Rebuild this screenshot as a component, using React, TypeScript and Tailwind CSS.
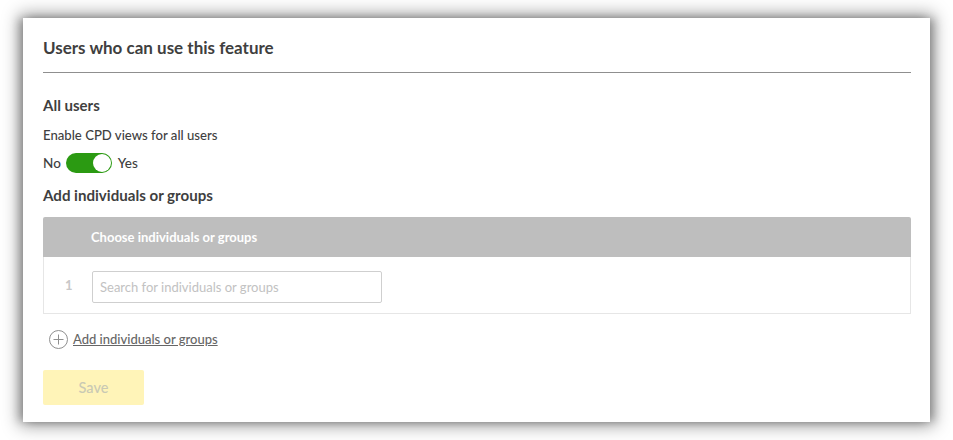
export default function App() {
  return (
    <div className="h-[440px] w-[953px] overflow-hidden bg-white pl-[23px] pt-[18px] font-['Lato',sans-serif] text-[#3f3f3f]">
      <div className="h-[404px] w-[907px] bg-white px-5 shadow-[0_0_16px_4px_rgba(0,0,0,0.38),-5px_0_8px_-1px_rgba(0,0,0,0.22),5px_0_8px_-1px_rgba(0,0,0,0.22)]">
        <div className="flex h-[55px] w-[868px] items-end border-b border-[#8f8f8f] pb-[14px]">
          <h1 className="text-[17px] font-bold leading-[20px]">Users who can use this feature</h1>
        </div>
        <h2 className="mt-[22px] text-[15px] font-bold leading-[20px]">All users</h2>
        <p className="mt-[10px] text-[13.15px] font-medium leading-[20px]">Enable CPD views for all users</p>
        <div className="mt-2 flex h-5 items-center text-[13.5px] font-medium">
          <span>No</span>
          <span className="ml-[5px] flex h-5 w-[46px] items-center justify-end rounded-full bg-[#2b9a12] pr-[1px]">
            <span className="h-[18px] w-[18px] rounded-full bg-white" />
          </span>
          <span className="ml-[6px]">Yes</span>
        </div>
        <h2 className="mt-3 text-[15.1px] font-bold leading-[20px]">Add individuals or groups</h2>
        <div className="mt-3 w-[868px] rounded-t-[2px] border-b border-[#e6e6e6]">
          <div className="flex h-10 items-center rounded-t-[2px] bg-[#bebebe] pl-12 pt-[1px] text-[13px] font-bold text-white">
            Choose individuals or groups
          </div>
          <div className="flex h-[56px] items-start border-x border-[#e6e6e6] pt-[14px]">
            <span className="mt-[4px] w-12 pl-[21px] text-[13px] font-bold leading-[20px] text-[#c8c8c8]">1</span>
            <input
              readOnly
              placeholder="Search for individuals or groups"
              className="h-8 w-[290px] rounded-[2px] border border-[#cfcfcf] px-[7px] text-[13px] outline-none placeholder:text-[#c2c2c2]"
            />
          </div>
        </div>
        <div className="ml-[6px] mt-4 flex h-5 items-start">
          <svg width="19" height="19" viewBox="0 0 19 19" fill="none" stroke="#8f8f8f" strokeWidth="1">
            <circle cx="9.5" cy="9.5" r="9" />
            <path d="M9.5 4.5v10M4.5 9.5h10" />
          </svg>
          <a className="ml-[5px] text-[13px] font-medium leading-[18px] text-[#666666] underline">Add individuals or groups</a>
        </div>
        <button className="mt-5 block h-[35px] w-[101px] rounded-[2px] bg-[#fff4b8] text-[14.5px] font-medium text-[#c9c9b4]">
          Save
        </button>
      </div>
    </div>
  );
}
